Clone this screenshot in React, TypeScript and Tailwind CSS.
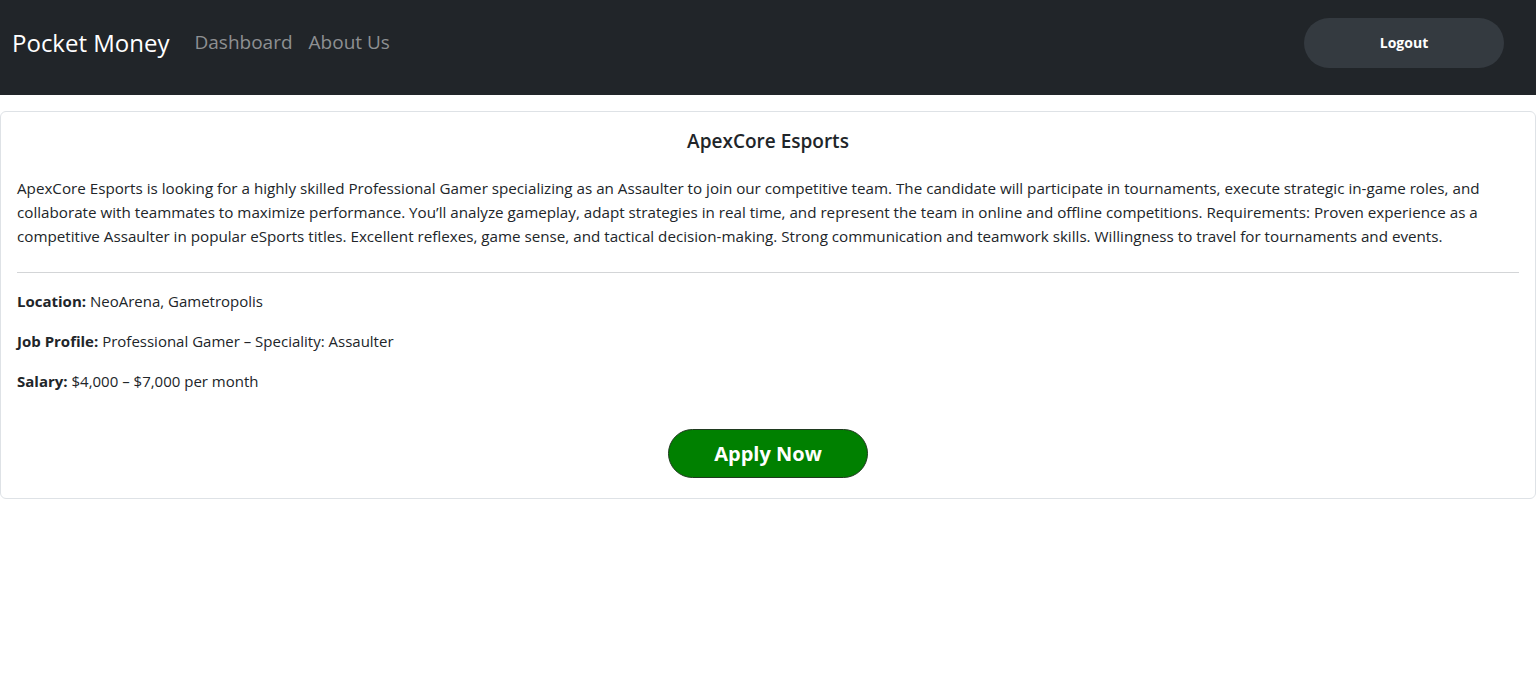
const font = { fontFamily: '"Segoe UI", "Open Sans", "Noto Sans", sans-serif' };

const LINES = [
  "ApexCore Esports is looking for a highly skilled Professional Gamer specializing as an Assaulter to join our competitive team. The candidate will participate in tournaments, execute strategic in-game roles, and",
  "collaborate with teammates to maximize performance. You\u2019ll analyze gameplay, adapt strategies in real time, and represent the team in online and offline competitions. Requirements: Proven experience as a",
  "competitive Assaulter in popular eSports titles. Excellent reflexes, game sense, and tactical decision-making. Strong communication and teamwork skills. Willingness to travel for tournaments and events.",
];

function Navbar() {
  return (
    <header className="bg-[#212529] h-[95px] flex items-center justify-between pl-3 pr-8 pb-[10px]">
      <nav className="flex items-center">
        <a href="#" className="text-white text-[24px] mr-[25px]">
          Pocket Money
        </a>
        <a href="#" className="text-[#8e9092] text-[19px] mr-4">
          Dashboard
        </a>
        <a href="#" className="text-[#8e9092] text-[19px]">
          About Us
        </a>
      </nav>
      <button className="w-[200px] h-[50px] rounded-full bg-[#343a40] text-white text-[14px] font-bold">
        Logout
      </button>
    </header>
  );
}

function Row({ label, value }: { label: string; value: string }) {
  return (
    <p className="leading-6 mb-4">
      <span className="font-bold">{label}</span> {value}
    </p>
  );
}

export default function App() {
  return (
    <div className="min-h-screen bg-white text-[#212529]" style={font}>
      <Navbar />
      <div className="mt-4 border border-[#dee2e6] rounded-md px-4 pt-4 pb-5">
        <h5 className="text-center text-[19px] font-semibold leading-6 pt-px">ApexCore Esports</h5>
        <p className="mt-[23px] text-[15.2px] leading-6">
          {LINES.map((l) => (
            <span key={l} className="block whitespace-nowrap">
              {l}
            </span>
          ))}
        </p>
        <hr className="mt-6 mb-4 border-t border-[#d3d5d7]" />
        <div className="text-[15px]">
          <Row label="Location:" value="NeoArena, Gametropolis" />
          <Row label="Job Profile:" value="Professional Gamer – Speciality: Assaulter" />
          <Row label="Salary:" value="$4,000 – $7,000 per month" />
        </div>
        <div className="flex justify-center mt-9">
          <button className="w-[200px] h-[49px] rounded-full bg-[#008000] border border-[#1f3a1f] text-white text-[20px] font-bold">
            Apply Now
          </button>
        </div>
      </div>
    </div>
  );
}
